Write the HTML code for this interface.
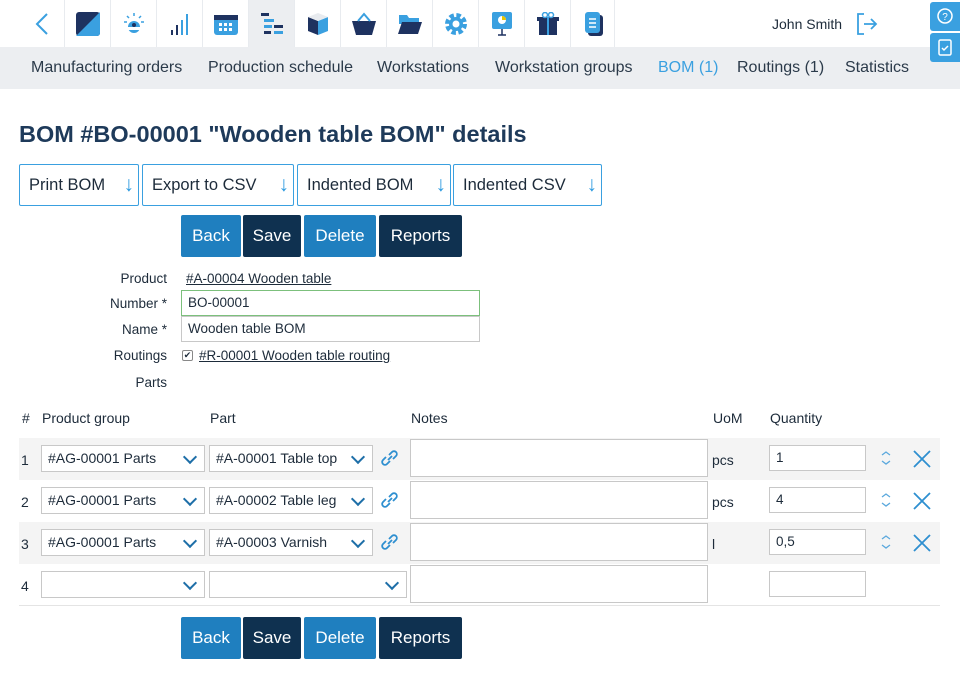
<!DOCTYPE html><html><head><style>
*{box-sizing:border-box}body{margin:0;width:960px;height:678px;overflow:hidden;background:#fff;font-family:"Liberation Sans",sans-serif;color:#1d2b3a;position:relative}
.a{position:absolute}
.top{left:0;top:0;width:960px;height:47px;background:#fff}
.cell{position:absolute;top:0;width:46px;height:47px;border-left:1px solid #e8ebef;display:flex;align-items:center;justify-content:center}
.nav{left:0;top:47px;width:960px;height:42px;background:#eceef1;font-size:16px;color:#2b3a4a}
.nav span{position:absolute;top:12px}
.btn{position:absolute;height:42px;border:1px solid #3aa0e0;border-radius:2px;font-size:16.5px;padding:11px 9px;color:#1d2b3a;background:#fff;white-space:nowrap}
.btn b{position:absolute;right:4px;top:8px;color:#2e9be0;font-weight:normal;font-size:21px}
.sb{position:absolute;height:42px;color:#fff;font-size:17px;text-align:center;line-height:42px;border-radius:2px}
.lb{position:absolute;font-size:13.5px;text-align:right;width:100px}
.inp{position:absolute;border:1px solid #c8c8c8;background:#fff;font-size:13.5px;padding:0 6px;line-height:24px;height:26px}
.sel{position:absolute;border:1px solid #c8c8c8;background:#fff;font-size:14px;height:27px;line-height:25px;padding-left:6px;white-space:nowrap}
.sel:after{content:"";position:absolute;right:9px;top:6px;width:8px;height:8px;border-right:2px solid #1e6fa8;border-bottom:2px solid #1e6fa8;transform:rotate(45deg)}
.row{position:absolute;left:19px;width:921px;height:42px}
.ta{position:absolute;border:1px solid #c8c8c8;background:#fff;height:38px;width:298px;left:410px}
.h{font-size:14px;position:absolute;top:410px}
.n{font-size:14px}
</style></head><body>
<div class="a top">
<svg class="a" style="left:33px;top:12px" width="18" height="24"><path d="M14 2 L4 12 L14 22" fill="none" stroke="#3aa0e0" stroke-width="2"/></svg>
<div class="cell" style="left:64px"><svg width="24" height="24"><rect width="24" height="24" rx="3" fill="#1e3260"/><path d="M24 0 V21 a3 3 0 0 1-3 3 H0Z" fill="#3aa0e0"/></svg></div>
<div class="cell" style="left:110px"><svg width="24" height="24"><circle cx="12" cy="15" r="6" fill="#3aa0e0"/><path d="M2 10h3M19 10h3M5 4l2 2M19 4l-2 2M12 1v3" stroke="#3aa0e0" stroke-width="1.5"/><path d="M6 15h12v3H6z" fill="#fff"/><circle cx="12" cy="13" r="2" fill="#1e3260"/></svg></div>
<div class="cell" style="left:156px"><svg width="20" height="24"><rect x="1" y="18" width="2" height="5" fill="#1e3260"/><rect x="6" y="13" width="2" height="10" fill="#1e3260"/><rect x="11" y="8" width="2" height="15" fill="#3aa0e0"/><rect x="16" y="2" width="2" height="21" fill="#3aa0e0"/></svg></div>
<div class="cell" style="left:202px"><svg width="24" height="24"><rect y="3" width="24" height="20" rx="3" fill="#3aa0e0"/><rect y="3" width="24" height="5" fill="#1e3260"/><g fill="#fff"><rect x="5" y="11" width="3" height="3"/><rect x="10" y="11" width="3" height="3"/><rect x="15" y="11" width="3" height="3"/><rect x="5" y="16" width="3" height="3"/><rect x="10" y="16" width="3" height="3"/><rect x="15" y="16" width="3" height="3"/></g></svg></div>
<div class="cell" style="left:248px;background:#eceef1"><svg width="24" height="24"><rect x="1" y="1" width="8" height="3" fill="#1e3260"/><rect x="4" y="7" width="10" height="3" fill="#3aa0e0"/><rect x="4" y="13" width="8" height="3" fill="#3aa0e0"/><rect x="14" y="13" width="9" height="3" fill="#1e3260"/><rect x="4" y="19" width="7" height="3" fill="#1e3260"/><rect x="14" y="19" width="9" height="3" fill="#3aa0e0"/></svg></div>
<div class="cell" style="left:294px"><svg width="22" height="24"><path d="M1 5 L11 9 V23 L1 19Z" fill="#1e3260"/><path d="M21 5 L11 9 V23 L21 19Z" fill="#3aa0e0"/><path d="M1 5L11 1 21 5 11 9Z" fill="#e8ebef"/></svg></div>
<div class="cell" style="left:340px"><svg width="26" height="24"><path d="M1 9H25L21 23H5Z" fill="#1e3260"/><path d="M7 9L13 2 19 9" fill="none" stroke="#3aa0e0" stroke-width="2"/></svg></div>
<div class="cell" style="left:386px"><svg width="24" height="22"><path d="M1 2h8l2 3h10v6H1z" fill="#3aa0e0"/><path d="M4 9h20l-4 12H0z" fill="#1e3260"/></svg></div>
<div class="cell" style="left:432px"><svg width="24" height="24"><circle cx="12" cy="12" r="8" fill="none" stroke="#3aa0e0" stroke-width="6" stroke-dasharray="4 2.3"/><circle cx="12" cy="12" r="7" fill="#3aa0e0"/><circle cx="12" cy="12" r="3.5" fill="#fff"/></svg></div>
<div class="cell" style="left:478px"><svg width="22" height="26"><rect x="1" y="1" width="20" height="17" rx="2" fill="#3aa0e0"/><circle cx="11" cy="9" r="4" fill="#fff"/><path d="M11 9V5a4 4 0 0 1 4 4z" fill="#e8c400"/><path d="M11 18v6M7 24h8" stroke="#1e3260" stroke-width="1.5"/></svg></div>
<div class="cell" style="left:524px"><svg width="22" height="24"><rect x="2" y="7" width="18" height="16" fill="#1e3260"/><rect x="0" y="5" width="22" height="4" fill="#1e3260"/><rect x="10" y="5" width="2" height="18" fill="#3aa0e0"/><circle cx="8" cy="3" r="2.5" fill="none" stroke="#3aa0e0" stroke-width="1.5"/><circle cx="14" cy="3" r="2.5" fill="none" stroke="#3aa0e0" stroke-width="1.5"/></svg></div>
<div class="cell" style="left:570px"><svg width="20" height="26"><rect x="4" y="4" width="15" height="21" rx="3" fill="#1e3260"/><rect x="1" y="1" width="15" height="21" rx="3" fill="#3aa0e0"/><path d="M5 8h7M5 12h7M5 16h7" stroke="#fff" stroke-width="1.5"/></svg></div>
<div class="cell" style="left:614px;width:1px"></div>
<span class="a" style="left:772px;top:16px;font-size:14px">John Smith</span>
<svg class="a" style="left:856px;top:13px" width="22" height="22"><path d="M8 1H2V21H8" fill="none" stroke="#3aa0e0" stroke-width="1.8"/><path d="M8 11H20M15 6l5 5-5 5" fill="none" stroke="#3aa0e0" stroke-width="1.8"/></svg>
</div>
<div class="a nav"><span style="left:31px">Manufacturing orders</span><span style="left:208px">Production schedule</span><span style="left:377px">Workstations</span><span style="left:495px">Workstation groups</span><span style="left:658px;color:#3aa0e0">BOM (1)</span><span style="left:737px">Routings (1)</span><span style="left:845px">Statistics</span></div>
<div class="a" style="left:930px;top:2px;width:30px;height:29px;background:#3aa0e0;border-radius:3px 0 0 3px;z-index:5"><svg width="30" height="29"><circle cx="15" cy="14" r="7" fill="none" stroke="#fff" stroke-width="1.5"/><text x="15" y="18" font-size="10" fill="#fff" text-anchor="middle" font-family="Liberation Sans">?</text></svg></div>
<div class="a" style="left:930px;top:33px;width:30px;height:29px;background:#3aa0e0;border-radius:3px 0 0 3px;z-index:5"><svg width="30" height="29"><rect x="9" y="7" width="12" height="15" rx="1.5" fill="none" stroke="#fff" stroke-width="1.5"/><path d="M12 15l2 2 4-4" fill="none" stroke="#fff" stroke-width="1.5"/></svg></div>
<div class="a" style="left:19px;top:121px;font-size:23.5px;font-weight:bold;color:#1e3a5a;white-space:nowrap">BOM #BO-00001 "Wooden table BOM" details</div>
<div class="btn" style="left:19px;top:164px;width:120px">Print BOM<b>↓</b></div>
<div class="btn" style="left:142px;top:164px;width:152px">Export to CSV<b>↓</b></div>
<div class="btn" style="left:297px;top:164px;width:154px">Indented BOM<b>↓</b></div>
<div class="btn" style="left:453px;top:164px;width:149px">Indented CSV<b>↓</b></div>
<div class="sb" style="left:181px;top:215px;width:60px;background:#1f7fbf">Back</div>
<div class="sb" style="left:243px;top:215px;width:58px;background:#0f3150">Save</div>
<div class="sb" style="left:304px;top:215px;width:72px;background:#1f7fbf">Delete</div>
<div class="sb" style="left:379px;top:215px;width:83px;background:#0f3150">Reports</div>
<div class="lb" style="left:67px;top:271px">Product</div>
<span class="a" style="left:186px;top:271px;font-size:13.5px;text-decoration:underline">#A-00004 Wooden table</span>
<div class="lb" style="left:67px;top:296px">Number *</div>
<div class="inp" style="left:181px;top:290px;width:299px;border-color:#7cc07c">BO-00001</div>
<div class="lb" style="left:67px;top:322px">Name *</div>
<div class="inp" style="left:181px;top:316px;width:299px">Wooden table BOM</div>
<div class="lb" style="left:67px;top:348px">Routings</div>
<div class="a" style="left:182px;top:350px;width:11px;height:11px;border:1px solid #888;border-radius:2px;font-size:9px;line-height:9px;text-align:center">✔</div>
<span class="a" style="left:199px;top:348px;font-size:13.5px;text-decoration:underline">#R-00001 Wooden table routing</span>
<div class="lb" style="left:67px;top:375px">Parts</div>
<span class="h" style="left:22px">#</span><span class="h" style="left:42px">Product group</span><span class="h" style="left:210px">Part</span><span class="h" style="left:411px">Notes</span><span class="h" style="left:713px">UoM</span><span class="h" style="left:770px">Quantity</span>

<div class="row" style="top:438px;background:#f4f4f4"></div>
<div class="row" style="top:522px;background:#f4f4f4"></div>
<div class="row" style="top:605px;height:1px;background:#e4e4e4"></div>

<div class="a n" style="top:452px;left:21px">1</div>
<div class="sel" style="left:41px;top:445px;width:164px">#AG-00001 Parts</div>
<div class="sel" style="left:209px;top:445px;width:164px">#A-00001 Table top</div>
<div class="ta" style="top:439px"></div><span class="a n" style="left:712px;top:452px">pcs</span>
<div class="inp" style="left:769px;top:445px;width:97px">1</div>

<div class="a n" style="top:494px;left:21px">2</div>
<div class="sel" style="left:41px;top:487px;width:164px">#AG-00001 Parts</div>
<div class="sel" style="left:209px;top:487px;width:164px">#A-00002 Table leg</div>
<div class="ta" style="top:481px"></div><span class="a n" style="left:712px;top:494px">pcs</span>
<div class="inp" style="left:769px;top:487px;width:97px">4</div>

<div class="a n" style="top:536px;left:21px">3</div>
<div class="sel" style="left:41px;top:529px;width:164px">#AG-00001 Parts</div>
<div class="sel" style="left:209px;top:529px;width:164px">#A-00003 Varnish</div>
<div class="ta" style="top:523px"></div><span class="a n" style="left:712px;top:536px">l</span>
<div class="inp" style="left:769px;top:529px;width:97px">0,5</div>

<div class="a n" style="top:578px;left:21px">4</div>
<div class="sel" style="left:41px;top:571px;width:164px"></div>
<div class="sel" style="left:209px;top:571px;width:198px"></div>
<div class="ta" style="top:565px"></div>
<div class="inp" style="left:769px;top:571px;width:97px"></div>

<svg class="a" style="left:380px;top:448px" width="20" height="110"><g fill="none" stroke="#2e8fd0" stroke-width="1.8"><g id="l"><path d="M9 7l3-3a2.5 2.5 0 0 1 4 4l-3 3M10 13l-3 3a2.5 2.5 0 0 1-4-4l3-3M8 12l4-4"/></g><use href="#l" y="42"/><use href="#l" y="84"/></g></svg>
<svg class="a" style="left:878px;top:450px" width="16" height="104"><g fill="none" stroke="#5aa8dd" stroke-width="1.3"><path d="M4 5l4-3 4 3M4 11l4 3 4-3"/><path d="M4 47l4-3 4 3M4 53l4 3 4-3"/><path d="M4 89l4-3 4 3M4 95l4 3 4-3"/></g></svg>
<svg class="a" style="left:912px;top:450px" width="20" height="104"><g stroke="#2e8fd0" stroke-width="1.8"><path d="M2 1l16 16M18 1L2 17"/><path d="M2 43l16 16M18 43L2 59"/><path d="M2 85l16 16M18 85L2 101"/></g></svg>

<div class="sb" style="left:181px;top:617px;width:60px;background:#1f7fbf">Back</div>
<div class="sb" style="left:243px;top:617px;width:58px;background:#0f3150">Save</div>
<div class="sb" style="left:304px;top:617px;width:72px;background:#1f7fbf">Delete</div>
<div class="sb" style="left:379px;top:617px;width:83px;background:#0f3150">Reports</div>
</body></html>
